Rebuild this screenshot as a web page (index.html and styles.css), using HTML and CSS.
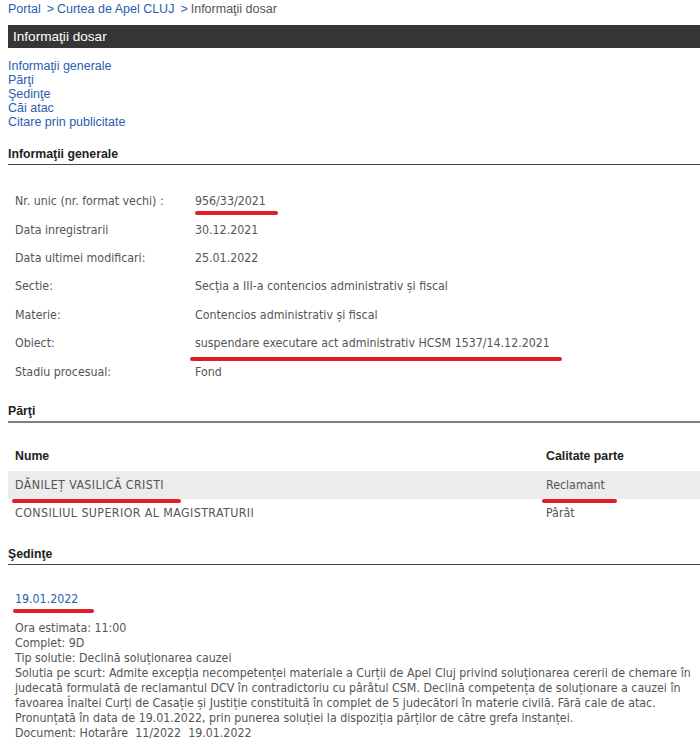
FILE: index.html
```html
<!DOCTYPE html>
<html lang="ro">
<head>
  <meta charset="UTF-8">
  <title>Informaţii dosar</title>
  <link rel="stylesheet" href="styles.css">
</head>
<body>
  <div class="crumbs">
    <a href="#">Portal</a><span class="sep">&gt;</span><a href="#">Curtea de Apel CLUJ</a><span class="sep">&gt;</span><span class="here">Informaţii dosar</span>
  </div>

  <div class="titlebar">Informaţii dosar</div>

  <ul class="toc">
    <li><a href="#gen">Informaţii generale</a></li>
    <li><a href="#parti">Părţi</a></li>
    <li><a href="#sed">Şedinţe</a></li>
    <li><a href="#cai">Căi atac</a></li>
    <li><a href="#cit">Citare prin publicitate</a></li>
  </ul>

  <h2 class="section" id="gen">Informaţii generale</h2>
  <table class="info">
    <tr><td class="lbl">Nr. unic (nr. format vechi) :</td><td><span class="mark m-nr">956/33/2021</span></td></tr>
    <tr><td class="lbl">Data inregistrarii</td><td>30.12.2021</td></tr>
    <tr><td class="lbl">Data ultimei modificari:</td><td>25.01.2022</td></tr>
    <tr><td class="lbl">Sectie:</td><td>Secția a III-a contencios administrativ și fiscal</td></tr>
    <tr><td class="lbl">Materie:</td><td>Contencios administrativ și fiscal</td></tr>
    <tr><td class="lbl">Obiect:</td><td><span class="mark m-obj">suspendare executare act administrativ HCSM 1537/14.12.2021</span></td></tr>
    <tr><td class="lbl">Stadiu procesual:</td><td>Fond</td></tr>
  </table>

  <h2 class="section thick" id="parti">Părţi</h2>
  <table class="parti">
    <tr><th>Nume</th><th class="cal">Calitate parte</th></tr>
    <tr class="alt"><td class="name"><span class="mark m-name">DĂNILEȚ VASILICĂ CRISTI</span></td><td class="cal"><span class="mark m-cal">Reclamant</span></td></tr>
    <tr><td class="name">CONSILIUL SUPERIOR AL MAGISTRATURII</td><td class="cal">Pârât</td></tr>
  </table>

  <h2 class="section" id="sed">Şedinţe</h2>
  <div class="sedinta">
    <a class="date mark m-date" href="#">19.01.2022</a>
    <p>
      Ora estimata: 11:00<br>
      Complet: 9D<br>
      Tip solutie: Declină soluționarea cauzei<br>
      Solutia pe scurt: Admite excepția necompetenței materiale a Curții de Apel Cluj privind soluționarea cererii de chemare în judecată formulată de reclamantul DCV în contradictoriu cu pârâtul CSM. Declină competența de soluționare a cauzei în favoarea Înaltei Curți de Casație și Justiție constituită în complet de 5 judecători în materie civilă. Fără cale de atac. Pronunțată în data de 19.01.2022, prin punerea soluției la dispoziția părților de către grefa instanței.<br>
      Document: Hotarâre&nbsp; 11/2022&nbsp; 19.01.2022
    </p>
  </div>
</body>
</html>
```

FILE: styles.css
```css
body { margin: 0 0 0 8px; background: #fff; font-family: "Liberation Sans", Arial, sans-serif; color: #333; }
a { color: #2a5db0; text-decoration: none; }

.crumbs { font-size: 12.5px; line-height: 18px; color: #555; }
.crumbs .sep { color: #2a5db0; margin: 0 3px 0 6px; }
.crumbs .here { color: #555; }

.titlebar { margin-top: 7px; height: 23px; line-height: 23px; background: #363636; color: #fff; font-size: 13.6px; padding-left: 5px; }

.toc { list-style: none; margin: 11px 0 0; padding: 0; font-size: 12.5px; line-height: 14px; }

.section { margin: 0; font-size: 12.3px; font-weight: bold; color: #222; line-height: 16px; padding-bottom: 2px; border-bottom: 1px solid #444; }
#gen { margin-top: 17px; }
#parti { margin-top: 17px; }
#sed { margin-top: 18px; }
.section.thick { border-bottom: 2px solid #808080; }

.info, .parti, .sedinta { font-family: "DejaVu Sans Condensed", "DejaVu Sans", sans-serif; font-stretch: condensed; font-size: 12.3px; color: #555; }
.info { border-collapse: collapse; margin-top: 22px; }
.info td { height: 28.4px; padding: 0 0 0 7px; vertical-align: middle; }
.info td.lbl { width: 173px; }

.parti { border-collapse: collapse; width: 100%; margin-top: 19px; }
.parti th { font-family: "Liberation Sans", Arial, sans-serif; font-size: 12.3px; color: #222; text-align: left; height: 29px; padding: 0 0 0 7px; }
.parti td { height: 29px; padding: 0 0 0 7px; }
.parti td.name { letter-spacing: 0.42px; }
.parti .cal { width: 154px; }
.parti tr.alt td { background: #ececec; height: 28px; }

.mark { position: relative; }
.mark::after { content: ""; position: absolute; height: 4px; border-radius: 2px; background: #e21d2a; }
.m-nr::after { left: 0; right: -12px; bottom: -7px; }
.m-obj::after { left: -5px; right: -12px; bottom: -11px; }
.m-name::after { left: -3px; right: -17px; bottom: -11px; }
.m-cal::after { left: -4px; right: -12px; bottom: -11px; }
.m-date::after { left: -2px; right: -16px; bottom: -7px; }

.sedinta { padding-left: 7px; }
.sedinta .date { display: inline-block; margin-top: 27px; line-height: 14px; }
.sedinta p { margin: 15px 0 0; line-height: 15.1px; }
```
